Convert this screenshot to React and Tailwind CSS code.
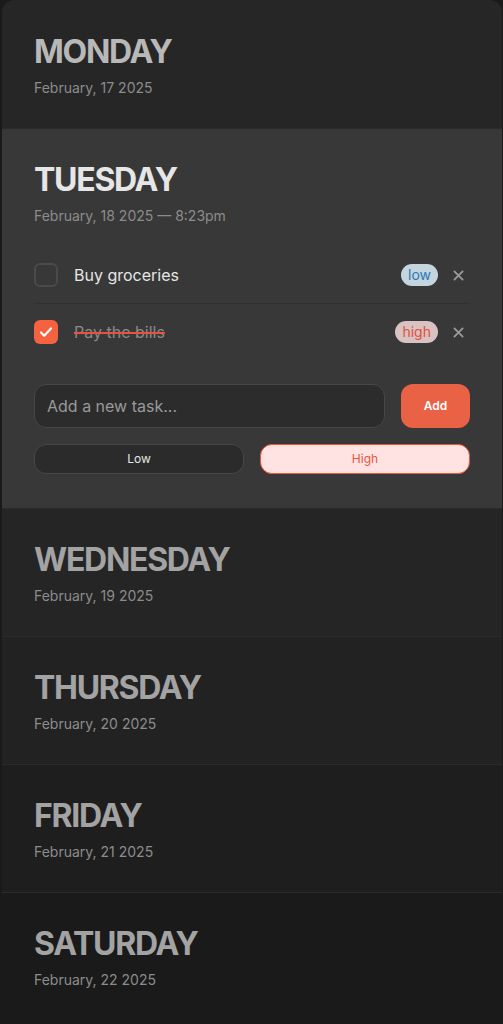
import { useState } from "react";

const days = [
  { name: "MONDAY", date: "February, 17 2025", bg: "bg-[#262626]", title: "text-[#b8b8b8]" },
  { name: "TUESDAY", date: "February, 18 2025 — 8:23pm", bg: "bg-[#383838]", title: "text-[#e6e6e6]", active: true },
  { name: "WEDNESDAY", date: "February, 19 2025", bg: "bg-[#252525]", title: "text-[#a3a3a3]" },
  { name: "THURSDAY", date: "February, 20 2025", bg: "bg-[#222222]", title: "text-[#a3a3a3]" },
  { name: "FRIDAY", date: "February, 21 2025", bg: "bg-[#1e1e1e]", title: "text-[#a3a3a3]" },
  { name: "SATURDAY", date: "February, 22 2025", bg: "bg-[#1a1a1a]", title: "text-[#a3a3a3]" },
];

function XIcon() {
  return (
    <svg width="11" height="11" viewBox="0 0 12 12" fill="none">
      <path d="M1.5 1.5l9 9M10.5 1.5l-9 9" stroke="#9a9a9a" strokeWidth="2" strokeLinecap="round" />
    </svg>
  );
}

function TaskRow({ task, last, onToggle }) {
  return (
    <div className={`flex items-center py-4 ${last ? "" : "border-b border-[#303030]"}`}>
      <button
        onClick={onToggle}
        className={`w-6 h-6 rounded-md flex items-center justify-center shrink-0 ${
          task.done ? "bg-[#f4623f]" : "border-2 border-[#4a4a4a]"
        }`}
      >
        {task.done && (
          <svg width="16" height="16" viewBox="0 0 16 16" fill="none">
            <path d="M3 8.5l3.2 3.2L13 4.5" stroke="white" strokeWidth="2.2" strokeLinecap="round" strokeLinejoin="round" />
          </svg>
        )}
      </button>
      <span
        className={`ml-4 flex-1 text-[16px] leading-6 ${
          task.done ? "text-[#8a8a8a] line-through decoration-[#e9533c] decoration-2" : "text-[#e6e6e6]"
        }`}
      >
        {task.text}
      </span>
      {task.priority === "low" ? (
        <span className="h-[22px] px-[7px] rounded-full bg-[#c4d5de] text-[#2a78b6] text-[14px] leading-[22px]">low</span>
      ) : (
        <span className="h-[22px] px-[7px] rounded-full bg-[#d8c2c2] text-[#e0503b] text-[14px] leading-[22px]">high</span>
      )}
      <button className="ml-2 w-6 h-6 flex items-center justify-center">
        <XIcon />
      </button>
    </div>
  );
}

export default function App() {
  const [tasks, setTasks] = useState([
    { text: "Buy groceries", priority: "low", done: false },
    { text: "Pay the bills", priority: "high", done: true },
  ]);
  const [priority, setPriority] = useState("high");

  const toggle = (i) =>
    setTasks(tasks.map((t, j) => (j === i ? { ...t, done: !t.done } : t)));

  return (
    <div className="min-h-screen bg-[#1a1a1a] pl-[2px] pr-[1px] font-['Inter',sans-serif]">
      <div className="rounded-xl overflow-hidden">
        {days.map((d, i) => (
          <div
            key={d.name}
            className={`${d.bg} px-8 ${d.active ? "pb-[34px]" : "pb-[30px]"} ${
              i > 0 ? "border-t border-[#2b2b2b] pt-[31px]" : "pt-8"
            }`}
          >
            <h2 className={`text-[32px] leading-[40px] font-bold tracking-[-0.04em] ${d.title}`}>{d.name}</h2>
            <p className="mt-[6px] text-[14px] leading-5 text-[#8c8c8c]">{d.date}</p>

            {d.active && (
              <div>
                <div className="mt-[21px]">
                  {tasks.map((t, j) => (
                    <TaskRow key={t.text} task={t} last={j === tasks.length - 1} onToggle={() => toggle(j)} />
                  ))}
                </div>

                <div className="mt-6 flex gap-4">
                  <input
                    type="text"
                    placeholder="Add a new task..."
                    className="flex-1 min-w-0 h-[44px] rounded-xl border border-[#474747] bg-[#2c2c2c] px-3 text-[16px] text-[#e6e6e6] placeholder-[#999999] outline-none"
                  />
                  <button className="w-[69px] h-[44px] rounded-xl bg-[#e96245] text-white text-[12px] font-semibold">
                    Add
                  </button>
                </div>

                <div className="mt-4 grid grid-cols-2 gap-4">
                  <button
                    onClick={() => setPriority("low")}
                    className={`h-[30px] rounded-xl border text-[12px] ${
                      priority === "low"
                        ? "bg-[#ffe3e3] border-[#f0533a] text-[#e9533c]"
                        : "bg-[#2b2b2b] border-[#474747] text-[#e6e6e6]"
                    }`}
                  >
                    Low
                  </button>
                  <button
                    onClick={() => setPriority("high")}
                    className={`h-[30px] rounded-xl border text-[12px] ${
                      priority === "high"
                        ? "bg-[#ffe3e3] border-[#f0533a] text-[#e9533c]"
                        : "bg-[#2b2b2b] border-[#474747] text-[#e6e6e6]"
                    }`}
                  >
                    High
                  </button>
                </div>
              </div>
            )}
          </div>
        ))}
      </div>
    </div>
  );
}
